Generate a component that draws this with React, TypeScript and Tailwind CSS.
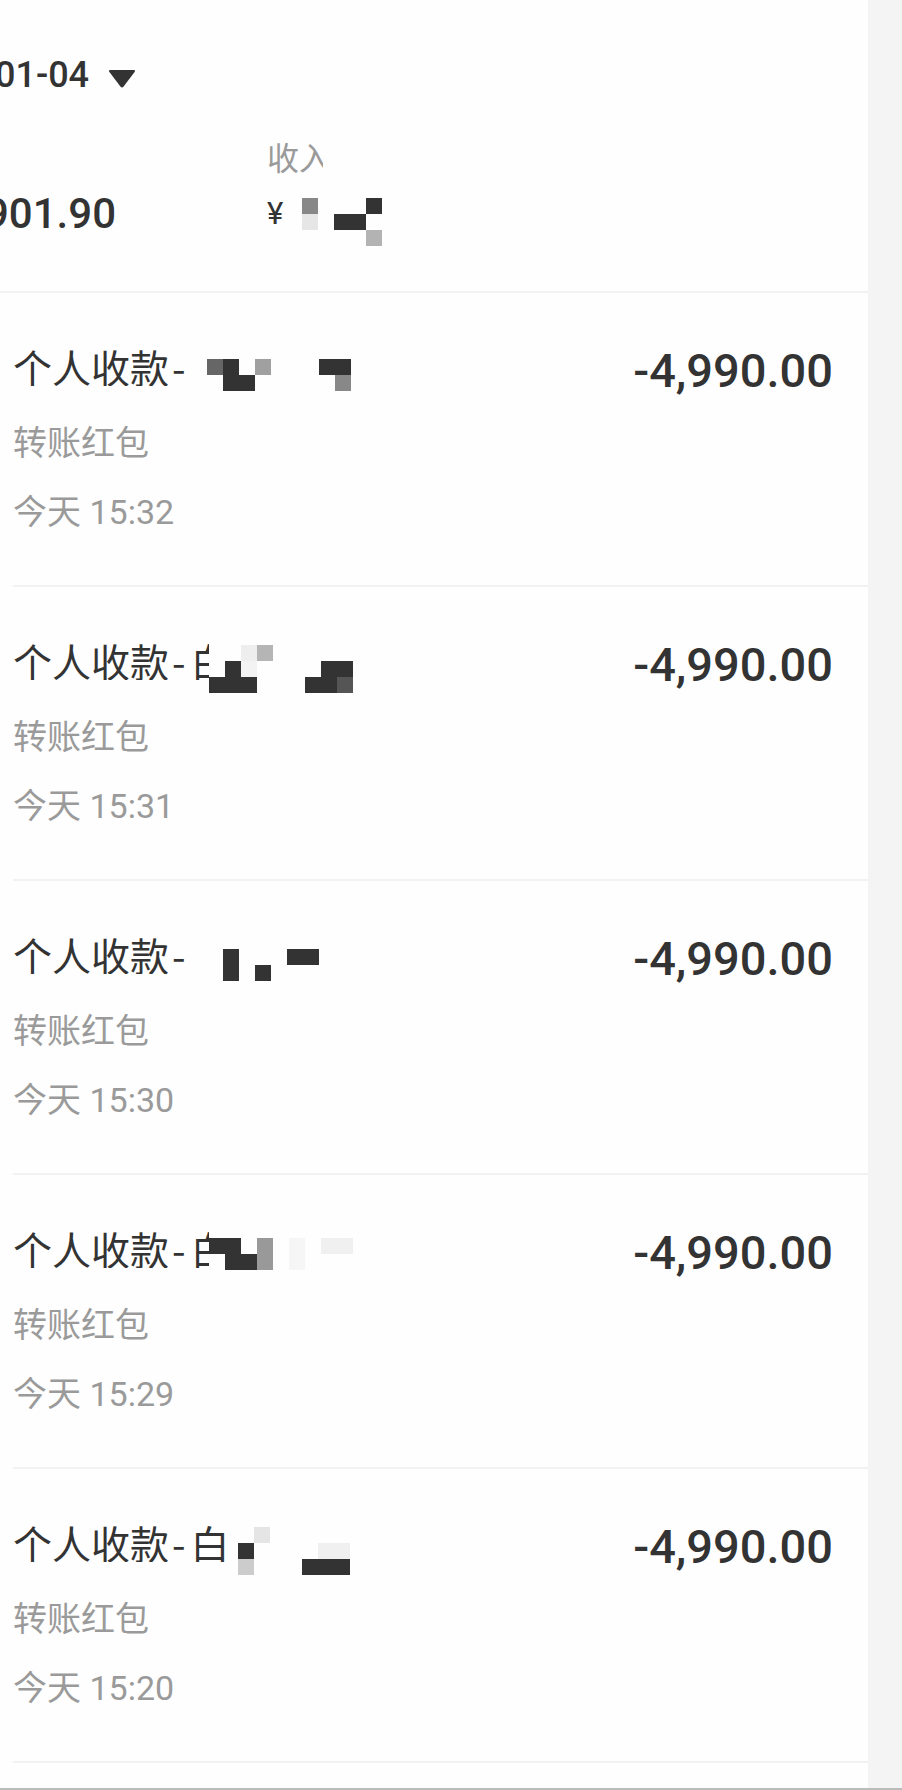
import React from 'react';

const D = 'bg-[#333333]';
const _ = '';

interface Txn {
  suffix: string;
  nameWidth: string;
  mosaicOffset: string;
  cells: string[][];
  time: string;
}

const txns: Txn[] = [
  {
    suffix: '',
    nameWidth: 'w-[194px]',
    mosaicOffset: '-mt-[4px]',
    cells: [
      [_, 'bg-[#666666]', _],
      [_, D, D],
      [_, _, D],
      [_, 'bg-[#a0a0a0]', _],
      [_, _, _],
      [_, _, _],
      [_, _, _],
      [_, D, _],
      [_, D, 'bg-[#888888]'],
    ],
    time: '15:32',
  },
  {
    suffix: '白',
    nameWidth: 'w-[196px]',
    mosaicOffset: 'mt-[4px]',
    cells: [
      [_, _, D],
      [_, D, D],
      ['bg-[#eeeeee]', 'bg-[#f3f3f3]', D],
      ['bg-[#b5b5b5]', _, _],
      [_, _, _],
      [_, _, _],
      [_, _, D],
      [_, D, D],
      [_, D, 'bg-[#555555]'],
    ],
    time: '15:31',
  },
  {
    suffix: '',
    nameWidth: 'w-[194px]',
    mosaicOffset: '-mt-[2px]',
    cells: [
      [_, _, _],
      [_, D, D],
      [_, _, _],
      [_, _, D],
      [_, _, _],
      [_, D, _],
      [_, D, _],
      [_, _, _],
      [_, _, _],
    ],
    time: '15:30',
  },
  {
    suffix: '白',
    nameWidth: 'w-[196px]',
    mosaicOffset: 'mt-[9px]',
    cells: [
      [D, _, _],
      [D, D, _],
      [_, D, _],
      ['bg-[#999999]', 'bg-[#999999]', _],
      [_, _, _],
      ['bg-[#f6f6f6]', 'bg-[#f6f6f6]', _],
      [_, _, _],
      ['bg-[#f0f0f0]', _, _],
      ['bg-[#f0f0f0]', _, _],
    ],
    time: '15:29',
  },
  {
    suffix: '白',
    nameWidth: 'w-[225px]',
    mosaicOffset: 'mt-[4px]',
    cells: [
      [_, D, 'bg-[#cccccc]'],
      ['bg-[#e5e5e5]', _, _],
      [_, _, _],
      [_, _, _],
      [_, _, D],
      [_, 'bg-[#f0f0f0]', D],
      [_, 'bg-[#f0f0f0]', D],
    ],
    time: '15:20',
  },
];

// Redaction blocks from the original screenshot, 16px cells.
function Mosaic({ cells, className }: { cells: string[][]; className?: string }) {
  return (
    <div className={`flex shrink-0 ${className ?? ''}`}>
      {cells.map((col, i) => (
        <div key={i} className="flex flex-col">
          {col.map((c, j) => (
            <div key={j} className={`w-4 h-4 ${c}`} />
          ))}
        </div>
      ))}
    </div>
  );
}

function Header() {
  return (
    <header className="h-[293px] shrink-0 flex flex-col border-b-2 border-[#f2f2f2] overflow-hidden">
      <div className="pt-[57px] flex items-start">
        <span className="-ml-[5px] text-[36px] leading-[36px] font-medium text-[#333]">01-04</span>
        <svg className="ml-[19px] mt-[12px] shrink-0" width="28" height="19" viewBox="0 0 28 19">
          <path d="M2.5 1 H25.5 Q28 1 26.6 3 L15.6 17.6 Q14 19.4 12.4 17.6 L1.4 3 Q0 1 2.5 1 Z" fill="#333" />
        </svg>
      </div>
      <div className="mt-[50px] flex">
        <div className="w-[267px] flex flex-col">
          <span className="h-[32px]" />
          <span className="mt-[16px] -ml-[15px] text-[42px] leading-[46px] font-medium text-[#333]">
            901.90
          </span>
        </div>
        <div className="flex flex-col">
          <span className="w-[56px] overflow-hidden whitespace-nowrap text-[32px] leading-[32px] text-[#9a9a9a]">
            收入
          </span>
          <div className="mt-[16px] h-[46px] flex items-start">
            <span className="text-[31px] leading-[46px] text-[#333]">¥</span>
            <Mosaic
              className="ml-[19px] mt-[7px]"
              cells={[
                ['bg-[#888888]', 'bg-[#e6e6e6]', _],
                [_, _, _],
                [_, D, _],
                [_, D, _],
                [D, _, 'bg-[#b3b3b3]'],
              ]}
            />
          </div>
        </div>
      </div>
    </header>
  );
}

function TxnRow({ txn }: { txn: Txn }) {
  return (
    <div className="h-[294px] shrink-0 flex flex-col">
      <div className="flex-1 flex justify-between pl-[13px] pr-[35px] pt-[54px]">
        <div className="flex flex-col">
          <div className="h-[39px] flex items-start">
            <div
              className={`${txn.nameWidth} shrink-0 overflow-hidden whitespace-nowrap text-[39px] leading-[39px] text-[#333] font-['Noto_Sans_CJK_SC',sans-serif]`}
            >
              个人收款<span className="ml-[3px] mr-[5px]">-</span>
              {txn.suffix}
            </div>
            <Mosaic cells={txn.cells} className={txn.mosaicOffset} />
          </div>
          <p className="mt-[40px] text-[34px] leading-[34px] text-[#9a9a9a]">转账红包</p>
          <p className="mt-[35px] text-[34px] leading-[34px] text-[#9a9a9a]">今天 {txn.time}</p>
        </div>
        <p className="text-[47px] leading-[47px] font-medium text-[#333]">-4,990.00</p>
      </div>
      <div className="ml-[13px] h-[2px] bg-[#f2f2f2]" />
    </div>
  );
}

export default function App() {
  return (
    <div className="w-[902px] h-[1790px] flex flex-col bg-white font-['Roboto','Noto_Sans_CJK_SC',sans-serif]">
      <div className="flex-1 flex min-h-0">
        <main className="w-[868px] flex flex-col bg-[#fefefe]">
          <Header />
          {txns.map((t) => (
            <TxnRow key={t.time} txn={t} />
          ))}
        </main>
        <div className="flex-1 bg-[#f4f4f4]" />
      </div>
      <div className="h-[2px] bg-[#bcbcbc]" />
    </div>
  );
}
